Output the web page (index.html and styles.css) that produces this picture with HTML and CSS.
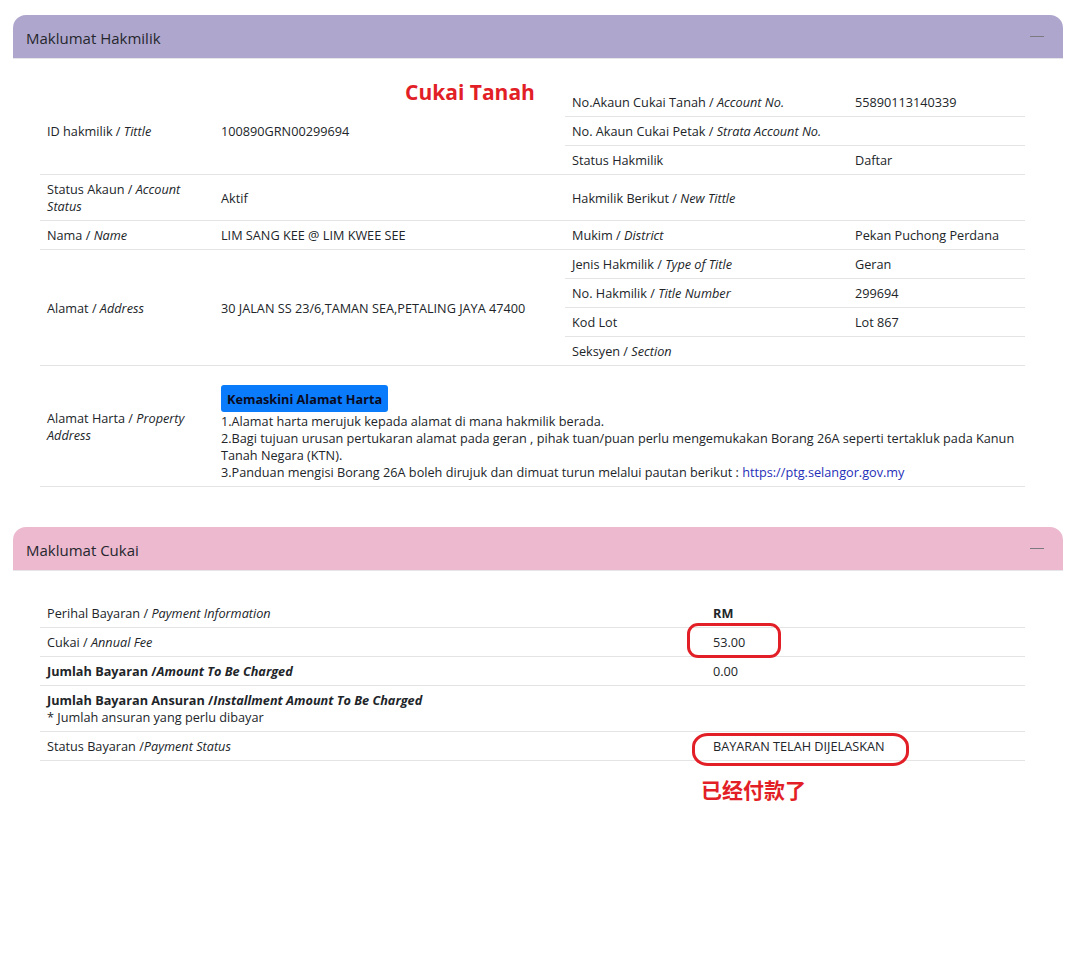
FILE: index.html
```html
<!DOCTYPE html>
<html lang="ms">
<head>
<meta charset="utf-8">
<title>Maklumat Hakmilik</title>
<link rel="stylesheet" href="styles.css">
</head>
<body>
<div class="page">
  <section class="card">
    <div class="card-header header-purple">
      <span class="card-title">Maklumat Hakmilik</span>
      <span class="collapse-btn"></span>
    </div>
    <div class="card-body">
      <span class="note note-cukai">Cukai Tanah</span>
      <table class="info-table">
        <colgroup>
          <col class="c1"><col class="c2"><col class="c3"><col class="c4">
        </colgroup>
        <tbody>
          <tr>
            <td rowspan="3">ID hakmilik / <i>Tittle</i></td>
            <td rowspan="3">100890GRN00299694</td>
            <td>No.Akaun Cukai Tanah / <i>Account No.</i></td>
            <td>55890113140339</td>
          </tr>
          <tr>
            <td>No. Akaun Cukai Petak / <i>Strata Account No.</i></td>
            <td></td>
          </tr>
          <tr>
            <td>Status Hakmilik</td>
            <td>Daftar</td>
          </tr>
          <tr>
            <td>Status Akaun / <i>Account Status</i></td>
            <td>Aktif</td>
            <td>Hakmilik Berikut / <i>New Tittle</i></td>
            <td></td>
          </tr>
          <tr>
            <td>Nama / <i>Name</i></td>
            <td>LIM SANG KEE @ LIM KWEE SEE</td>
            <td>Mukim / <i>District</i></td>
            <td>Pekan Puchong Perdana</td>
          </tr>
          <tr>
            <td rowspan="4">Alamat / <i>Address</i></td>
            <td rowspan="4">30 JALAN SS 23/6,TAMAN SEA,PETALING JAYA 47400</td>
            <td>Jenis Hakmilik / <i>Type of Title</i></td>
            <td>Geran</td>
          </tr>
          <tr>
            <td>No. Hakmilik / <i>Title Number</i></td>
            <td>299694</td>
          </tr>
          <tr>
            <td>Kod Lot</td>
            <td>Lot 867</td>
          </tr>
          <tr>
            <td>Seksyen / <i>Section</i></td>
            <td></td>
          </tr>
          <tr>
            <td>Alamat Harta / <i>Property Address</i></td>
            <td colspan="3" class="harta">
              <button class="btn-primary" type="button">Kemaskini Alamat Harta</button>
              <div>1.Alamat harta merujuk kepada alamat di mana hakmilik berada.</div>
              <div>2.Bagi tujuan urusan pertukaran alamat pada geran , pihak tuan/puan perlu mengemukakan Borang 26A seperti tertakluk pada Kanun Tanah Negara (KTN).</div>
              <div>3.Panduan mengisi Borang 26A boleh dirujuk dan dimuat turun melalui pautan berikut : <a href="#" class="link">https://ptg.selangor.gov.my</a></div>
            </td>
          </tr>
        </tbody>
      </table>
    </div>
  </section>

  <section class="card card-second">
    <div class="card-header header-pink">
      <span class="card-title">Maklumat Cukai</span>
      <span class="collapse-btn"></span>
    </div>
    <div class="card-body card-body-tax">
      <table class="tax-table">
        <colgroup>
          <col class="t1"><col class="t2">
        </colgroup>
        <tbody>
          <tr>
            <td>Perihal Bayaran / <i>Payment Information</i></td>
            <td class="rm">RM</td>
          </tr>
          <tr>
            <td>Cukai / <i>Annual Fee</i></td>
            <td class="mark-cell">53.00<span class="ring ring-fee"></span></td>
          </tr>
          <tr>
            <td><b>Jumlah Bayaran /<i>Amount To Be Charged</i></b></td>
            <td>0.00</td>
          </tr>
          <tr>
            <td><b>Jumlah Bayaran Ansuran /<i>Installment Amount To Be Charged</i></b><br>* Jumlah ansuran yang perlu dibayar</td>
            <td></td>
          </tr>
          <tr>
            <td>Status Bayaran /<i>Payment Status</i></td>
            <td class="mark-cell">BAYARAN TELAH DIJELASKAN<span class="ring ring-status"></span></td>
          </tr>
        </tbody>
      </table>
      <span class="note note-paid">已经付款了</span>
    </div>
  </section>
</div>
</body>
</html>
```

FILE: styles.css
```css
html, body {
  margin: 0;
  padding: 0;
  background: #ffffff;
}

body {
  font-family: "Open Sans", "Noto Sans", "Liberation Sans", sans-serif;
  font-size: 12.7px;
  color: #212529;
}

.page {
  padding: 15px 17px 40px 13px;
}

.card {
  background: #fff;
}

.card-second {
  margin-top: 40px;
}

.card-header {
  height: 44px;
  display: flex;
  align-items: center;
  justify-content: space-between;
  padding: 0 19px 0 13px;
  border-radius: 13px 13px 0 0;
  box-sizing: border-box;
  border-bottom: 1px solid #e6e6ea;
}

.header-purple {
  background: #aea6cd;
}

.header-pink {
  background: #ecb9cf;
}

.card-title {
  font-size: 15px;
  color: #26262e;
  padding-top: 2px;
}

.collapse-btn {
  width: 14px;
  height: 1px;
  background: #7a7a80;
  display: block;
}

.card-body {
  position: relative;
  padding: 29px 0 0 27px;
}

.card-body-tax {
  padding-top: 28px;
}

table {
  border-collapse: collapse;
  table-layout: fixed;
}

.info-table {
  width: 985px;
}

col.c1 { width: 174px; }
col.c2 { width: 351px; }
col.c3 { width: 283px; }
col.c4 { width: 177px; }

td {
  padding: 6px 7px 5px 7px;
  line-height: 17px;
  vertical-align: middle;
  border-bottom: 1px solid #e4e4e4;
  text-align: left;
}

.harta {
  padding-top: 19px;
  padding-bottom: 5px;
}

.btn-primary {
  display: block;
  height: 27px;
  padding: 0 6px;
  margin-bottom: 1px;
  background: #0a7bfb;
  color: #0b0b1e;
  border: 0;
  border-radius: 3px;
  font-family: inherit;
  font-size: 12.7px;
  font-weight: 700;
}

.link {
  color: #1f2fb8;
  text-decoration: none;
}

.tax-table {
  width: 985px;
}

col.t1 { width: 666px; }
col.t2 { width: 319px; }

.rm {
  font-weight: 700;
}

.mark-cell {
  position: relative;
}

.ring {
  position: absolute;
  border: 3px solid #e21f26;
  box-sizing: border-box;
}

.ring-fee {
  left: -19px;
  top: -5px;
  width: 94px;
  height: 35px;
  border-radius: 11px;
}

.ring-status {
  left: -14px;
  top: 1px;
  width: 217px;
  height: 33px;
  border-radius: 16px / 14px;
}

.note {
  position: absolute;
  color: #e21f26;
  font-weight: 700;
  white-space: nowrap;
}

.note-cukai {
  left: 392px;
  top: 19px;
  font-size: 21px;
  font-family: "Open Sans", "Noto Sans", sans-serif;
}

.note-paid {
  left: 688px;
  top: 204px;
  font-size: 21px;
  line-height: 28px;
  font-family: "Noto Sans CJK SC", sans-serif;
}
```
